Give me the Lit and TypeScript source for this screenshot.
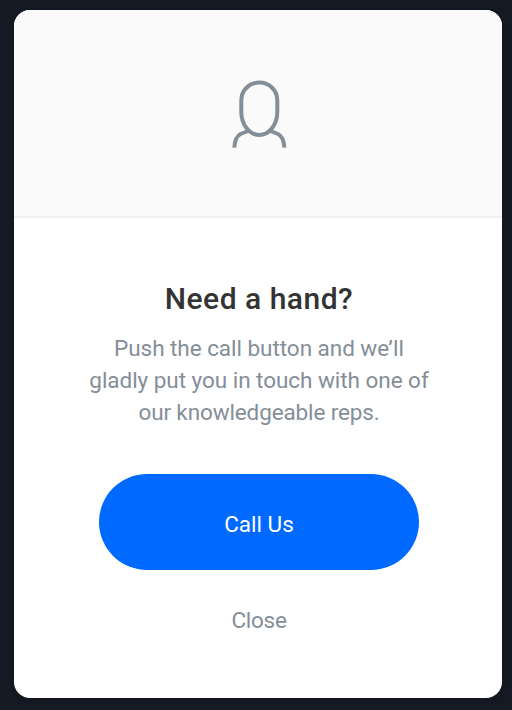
import { LitElement, html, css } from "lit";
import { customElement } from "lit/decorators.js";

@customElement("app-root")
export class AppRoot extends LitElement {
  static styles = css`
    :host {
      display: block;
      box-sizing: border-box;
      height: 710px;
      padding: 10px 10px 12px 14px;
      overflow: hidden;
      background: #151a25;
      font-family: Roboto, "Liberation Sans", sans-serif;
      font-size: 22.5px;
      color: #848e98;
    }
    .card {
      box-sizing: border-box;
      height: 688px;
      border-radius: 16px;
      background: #fff;
      overflow: hidden;
      text-align: center;
      box-shadow: 0 2px 10px rgba(0, 0, 0, 0.25);
    }
    .top {
      box-sizing: border-box;
      height: 208px;
      padding: 68px 0 0 2px;
      background: #fafafa;
      border-bottom: 2px solid #f0f0f0;
    }
    .top svg { display: block; margin: 0 auto; }
    .body { display: flex; flex-direction: column; align-items: center; padding: 61px 0 0 2px; }
    h1 { margin: 0; font-size: 30px; line-height: 40px; font-weight: 500; letter-spacing: 0.5px; color: #333; white-space: nowrap; }
    p { margin: 13px 0 0; line-height: 32px; }
    .line { display: block; white-space: nowrap; letter-spacing: -0.04px; }
    .last { letter-spacing: -0.13px; }
    button { border: 0; padding: 0; background: none; font: inherit; color: inherit; }
    .call { width: 320px; height: 96px; margin-top: 46px; border-radius: 48px; background: #0069ff; color: #fff; padding-top: 4px; }
    .close { margin-top: 34px; line-height: 32px; letter-spacing: -0.25px; }
  `;

  render() {
    return html`
      <div class="card">
        <div class="top">
          <svg width="60" height="74" viewBox="0 0 60 74" fill="none" stroke="#848e98" stroke-width="4">
            <path d="M30.300 4.500C20 4.500 12.300 12.500 12.300 22.500V34C12.300 46 20 57 30.300 57S48.300 46 48.300 34V22.500C48.300 12.500 40.600 4.500 30.300 4.500Z" />
            <path d="M19 53L11.500 56C7.500 58 5.800 62 5.300 69.700M41.600 53L49 56C53 58 54.900 62 55.400 69.700" />
          </svg>
        </div>
        <div class="body">
          <h1>Need a hand?</h1>
          <p>
            <span class="line">Push the call button and we’ll</span>
            <span class="line">gladly put you in touch with one of</span>
            <span class="line last">our knowledgeable reps.</span>
          </p>
          <button class="call">Call Us</button>
          <button class="close">Close</button>
        </div>
      </div>
    `;
  }
}
